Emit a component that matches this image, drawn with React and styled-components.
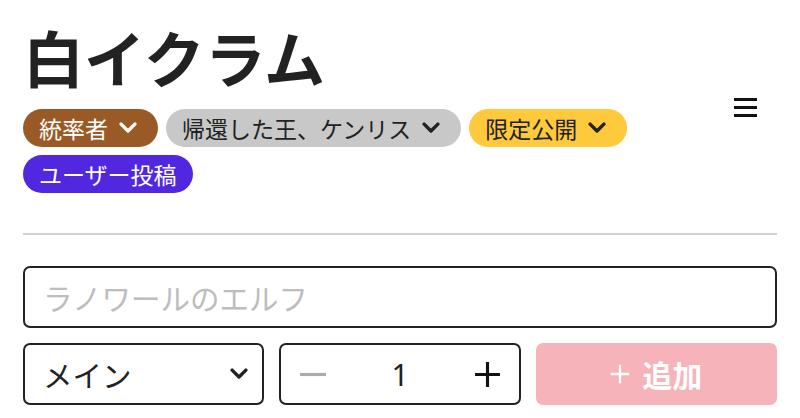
import styled, { createGlobalStyle } from 'styled-components';

const GlobalStyle = createGlobalStyle`
  html, body {
    margin: 0;
    padding: 0;
    background: #fff;
  }
  body {
    font-family: 'Noto Sans CJK JP', 'Noto Sans', sans-serif;
    color: #222;
  }
`;

const Page = styled.div`
  padding: 14px 23px 0;
  width: 800px;
  box-sizing: border-box;
`;

const Header = styled.header`
  display: flex;
  justify-content: space-between;
  align-items: center;
`;

const Title = styled.h1`
  margin: 0 0 9px;
  font-size: 61px;
  font-weight: 700;
  line-height: 86px;
  color: #222;
`;

const Tags = styled.div`
  display: flex;
  flex-wrap: wrap;
  gap: 8px;
  max-width: 640px;
`;

const Tag = styled.button`
  display: flex;
  align-items: center;
  gap: 11px;
  height: 38px;
  padding: ${({ $chevron }) => ($chevron ? '0 21px 0 16px' : '0 16px')};
  border: none;
  border-radius: 19px;
  background: ${({ $bg }) => $bg};
  color: ${({ $fg }) => $fg};
  font-family: inherit;
  font-size: 23px;
  line-height: 1;
`;

const MenuButton = styled.button`
  display: flex;
  flex-direction: column;
  gap: 5px;
  padding: 0;
  margin: 8px 20px 0 0;
  border: none;
  background: none;
  span {
    display: block;
    width: 23px;
    height: 3px;
    background: #111;
  }
`;

const Divider = styled.hr`
  margin: 40px 0 31px;
  border: none;
  border-top: 2px solid #d0d0d0;
`;

const NameInput = styled.input`
  display: block;
  width: 100%;
  box-sizing: border-box;
  height: 62px;
  padding: 0 18px;
  border: 2px solid #222;
  border-radius: 7px;
  font-family: inherit;
  font-size: 29.5px;
  color: #222;
  outline: none;
  &::placeholder {
    color: #bdbdbd;
  }
`;

const Controls = styled.div`
  display: grid;
  grid-template-columns: 1fr 1fr 1fr;
  gap: 15px;
  margin-top: 15px;
`;

const Box = styled.div`
  display: flex;
  align-items: center;
  justify-content: space-between;
  height: 62px;
  box-sizing: border-box;
  border: 2px solid #222;
  border-radius: 7px;
  padding: ${({ $pad }) => $pad};
  font-size: 29.5px;
  color: #222;
`;

const Count = styled.span`
  font-family: 'Noto Sans', sans-serif;
  font-size: 30px;
`;

const AddButton = styled.button`
  display: flex;
  align-items: center;
  justify-content: center;
  gap: 12px;
  height: 62px;
  border: none;
  border-radius: 7px;
  background: #f7b3ba;
  color: #fff;
  font-family: inherit;
  font-size: 30px;
  font-weight: 700;
`;

function Chevron({ color, size = 18 }) {
  return (
    <svg width={size} height={size * 0.65} viewBox="0 0 17 11">
      <polyline
        points="2,2 8.5,8.5 15,2"
        fill="none"
        stroke={color}
        strokeWidth="3.2"
        strokeLinecap="round"
        strokeLinejoin="round"
      />
    </svg>
  );
}

function Plus({ color, size }) {
  return (
    <svg width={size} height={size} viewBox="0 0 26 26">
      <path d="M13 1v24M1 13h24" stroke={color} strokeWidth="3" />
    </svg>
  );
}

function Minus({ color, size }) {
  return (
    <svg width={size} height={size} viewBox="0 0 26 26">
      <path d="M1 13h25" stroke={color} strokeWidth="3" />
    </svg>
  );
}

const tags = [
  { label: '統率者', bg: '#9a5a26', fg: '#fff', chevron: true },
  { label: '帰還した王、ケンリス', bg: '#c8c8c8', fg: '#222', chevron: true },
  { label: '限定公開', bg: '#ffc93c', fg: '#222', chevron: true },
  { label: 'ユーザー投稿', bg: '#5128e0', fg: '#fff', chevron: false },
];

export default function App() {
  return (
    <>
      <GlobalStyle />
      <Page>
        <Header>
          <div>
            <Title>白イクラム</Title>
            <Tags>
              {tags.map((t) => (
                <Tag key={t.label} $bg={t.bg} $fg={t.fg} $chevron={t.chevron}>
                  {t.label}
                  {t.chevron && <Chevron color={t.fg} />}
                </Tag>
              ))}
            </Tags>
          </div>
          <MenuButton aria-label="メニュー">
            <span />
            <span />
            <span />
          </MenuButton>
        </Header>

        <Divider />

        <NameInput placeholder="ラノワールのエルフ" />

        <Controls>
          <Box $pad="0 14px 0 18px">
            メイン
            <Chevron color="#222" />
          </Box>
          <Box $pad="0 18px 0 18px">
            <Minus color="#aaa" size={27} />
            <Count>1</Count>
            <Plus color="#111" size={27} />
          </Box>
          <AddButton>
            <Plus color="#fff" size={20} />
            追加
          </AddButton>
        </Controls>
      </Page>
    </>
  );
}
